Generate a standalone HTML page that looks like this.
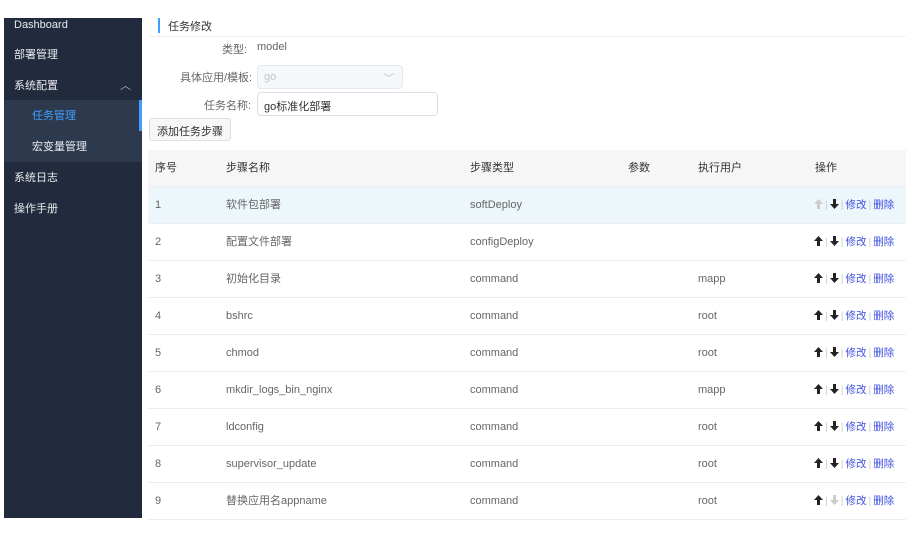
<!DOCTYPE html>
<html><head><meta charset="utf-8"><style>
*{margin:0;padding:0;box-sizing:border-box}
body{width:910px;height:538px;background:#fff;font-family:"Liberation Sans","Noto Sans CJK SC",sans-serif;font-size:11px;color:#666;position:relative;overflow:hidden}
.side{position:absolute;left:4px;top:18px;width:138px;height:500px;background:#222b3d}
.mi{position:absolute;left:10px;color:#e8eaee;font-size:11px}
.sub{position:absolute;left:0;top:82px;width:138px;height:62px;background:#2d3a4e}
.bar{position:absolute;left:135px;top:82px;width:3px;height:31px;background:#409eff}
.a{position:absolute;white-space:nowrap}
.tb{position:absolute;left:148px;width:758px;height:37px;border-bottom:1px solid #ebeef5}
.c{position:absolute;top:0;line-height:36px;white-space:nowrap}
.ops{position:absolute;left:814px;line-height:36px;font-size:10.5px;white-space:nowrap}
.ops svg{vertical-align:-1px}
.ops i{font-style:normal;color:#ccc;margin:0 2px}
.ops span{color:#3d4fe0}
</style></head><body>
<div class="side">
<div class="mi" style="top:0;line-height:14px">Dashboard</div>
<div class="mi" style="top:28px">部署管理</div>
<div class="mi" style="top:59px">系统配置</div>
<div class="mi" style="top:59px;left:116px;color:#aaa">︿</div>
<div class="sub"></div>
<div class="bar"></div>
<div class="mi" style="top:89px;left:28px;color:#409eff">任务管理</div>
<div class="mi" style="top:120px;left:28px">宏变量管理</div>
<div class="mi" style="top:151px">系统日志</div>
<div class="mi" style="top:182px">操作手册</div>
</div>
<div class="a" style="left:158px;top:18px;width:2px;height:15px;background:#409eff"></div>
<div class="a" style="left:168px;top:18px;color:#333">任务修改</div>
<div class="a" style="left:148px;top:36px;width:758px;height:1px;background:#f0f0f0"></div>
<div class="a" style="left:222px;top:41px">类型:</div>
<div class="a" style="left:257px;top:41px">model</div>
<div class="a" style="left:180px;top:69px">具体应用/模板:</div>
<div class="a" style="left:257px;top:65px;width:146px;height:24px;background:#f5f7fa;border:1px solid #e4e7ed;border-radius:4px;color:#c0c4cc;padding:5px 6px">go<span style="position:absolute;right:8px;top:4px">﹀</span></div>
<div class="a" style="left:204px;top:97px">任务名称:</div>
<div class="a" style="left:257px;top:92px;width:181px;height:24px;border:1px solid #dcdfe6;border-radius:4px;color:#333;padding:5px 6px">go标准化部署</div>
<div class="a" style="left:149px;top:118px;width:82px;height:23px;border:1px solid #dcdfe6;border-radius:3px;background:#f7f7f7;color:#333;padding:4px 0;text-align:center">添加任务步骤</div>
<div class="tb" style="top:150px;background:#f6f6f6;color:#333">
<div class="c" style="left:7px">序号</div><div class="c" style="left:78px">步骤名称</div><div class="c" style="left:322px">步骤类型</div><div class="c" style="left:480px">参数</div><div class="c" style="left:550px">执行用户</div><div class="c" style="left:667px">操作</div></div>
<div id="rows"></div>
<script>
function ar(up,c){return '<svg width="9" height="10" viewBox="0 0 9 10"><path d="'+(up?'M4.5 0L9 5H6V10H3V5H0Z':'M4.5 10L9 5H6V0H3V5H0Z')+'" fill="'+c+'"/></svg>';}
var d=[["软件包部署","softDeploy",""],["配置文件部署","configDeploy",""],["初始化目录","command","mapp"],["bshrc","command","root"],["chmod","command","root"],["mkdir_logs_bin_nginx","command","mapp"],["ldconfig","command","root"],["supervisor_update","command","root"],["替换应用名appname","command","root"]];
var h="";d.forEach(function(r,i){var t=187+i*37;
h+='<div class="tb" style="top:'+t+'px;'+(i==0?'background:#ecf6fb':'')+'"><div class="c" style="left:7px">'+(i+1)+'</div><div class="c" style="left:78px">'+r[0]+'</div><div class="c" style="left:322px">'+r[1]+'</div><div class="c" style="left:550px">'+r[2]+'</div></div>';
h+='<div class="ops a" style="top:'+t+'px">'+ar(1,i==0?'#ccc':'#222')+'<i>|</i>'+ar(0,i==8?'#ccc':'#222')+'<i>|</i><span>修改</span><i>|</i><span>删除</span></div>';});
document.getElementById("rows").innerHTML=h;
</script>
</body></html>
